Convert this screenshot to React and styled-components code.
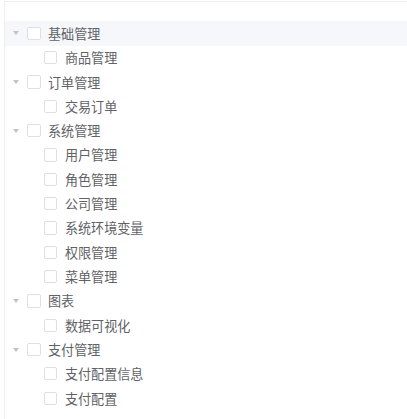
import React from "react";
import styled, { createGlobalStyle } from "styled-components";

const S = 0.936;
const px = (v) => `${(v * S).toFixed(2)}px`;

const GlobalStyle = createGlobalStyle`
  html, body {
    margin: 0;
    padding: 0;
    background: #fff;
  }
  body {
    font-family: "Noto Sans CJK SC", "Noto Sans", sans-serif;
  }
`;

const menus = [
  { label: "基础管理", current: true, children: ["商品管理"] },
  { label: "订单管理", children: ["交易订单"] },
  {
    label: "系统管理",
    children: ["用户管理", "角色管理", "公司管理", "系统环境变量", "权限管理", "菜单管理"],
  },
  { label: "图表", children: ["数据可视化"] },
  { label: "支付管理", children: ["支付配置信息", "支付配置"] },
];

const App = () => {
  return (
    <>
      <GlobalStyle />
      <Panel>
        <Tree>
          {menus.map((menu) => (
            <li key={menu.label}>
              <NodeRow $current={menu.current}>
                <Expander>
                  <Caret viewBox="0 0 6 4">
                    <path d="M0 0 L6 0 L3 4 Z" fill="#c0c4cc" />
                  </Caret>
                </Expander>
                <Check />
                <Label>{menu.label}</Label>
              </NodeRow>
              <Children>
                {menu.children.map((child) => (
                  <li key={child}>
                    <NodeRow $level={1}>
                      <Expander />
                      <Check />
                      <Label>{child}</Label>
                    </NodeRow>
                  </li>
                ))}
              </Children>
            </li>
          ))}
        </Tree>
      </Panel>
    </>
  );
};

const Panel = styled.div`
  margin: 1px 0 0 4px;
  min-height: calc(100vh - 1px);
  box-sizing: border-box;
  border-top: 1px solid #eeeeee;
  border-left: 1px solid #eeeeee;
  padding-top: 19.2px;
`;

const Tree = styled.ul`
  list-style: none;
  margin: 0;
  padding: 0;
`;

const Children = styled.ul`
  list-style: none;
  margin: 0;
  padding: 0;
`;

const NodeRow = styled.div`
  display: flex;
  align-items: center;
  height: ${px(26)};
  padding-left: ${({ $level = 0 }) => px(18 * $level)};
  background: ${({ $current }) => ($current ? "#f5f7fa" : "transparent")};
  cursor: pointer;
`;

const Expander = styled.span`
  display: flex;
  align-items: center;
  justify-content: center;
  width: ${px(24)};
  height: 100%;
  flex-shrink: 0;
`;

const Caret = styled.svg`
  width: 6px;
  height: 4px;
`;

const Check = styled.span`
  display: inline-block;
  width: ${px(14)};
  height: ${px(14)};
  box-sizing: border-box;
  border: 1px solid #dcdfe6;
  border-radius: 2px;
  background: #fff;
  margin-right: ${px(8)};
  flex-shrink: 0;
`;

const Label = styled.span`
  font-size: ${px(14)};
  color: #606266;
  white-space: nowrap;
`;

export default App;
